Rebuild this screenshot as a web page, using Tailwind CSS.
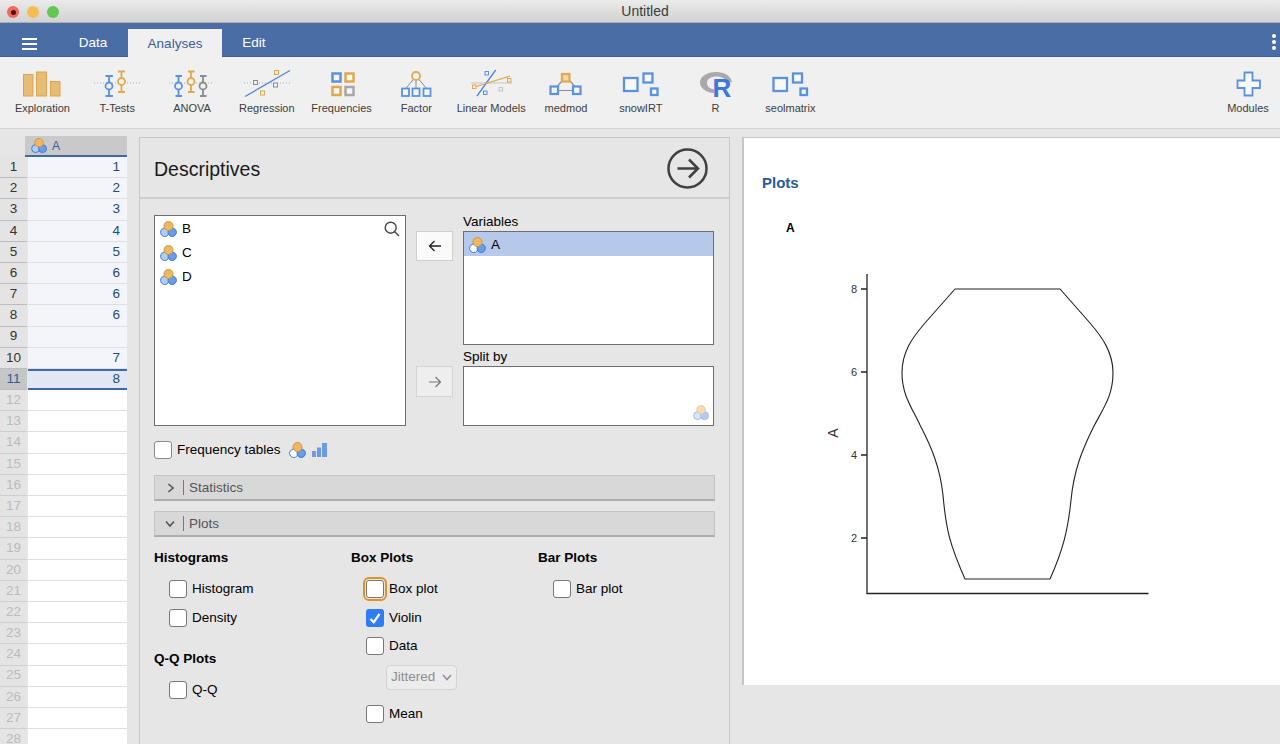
<!DOCTYPE html>
<html lang="en">
<head>
  <meta charset="UTF-8" />
  <title>Untitled</title>
  <script src="https://cdn.jsdelivr.net/npm/@tailwindcss/browser@4"></script>
</head>
<body class="bg-[#e6e6e6] text-black h-screen overflow-hidden flex flex-col font-['Liberation_Sans',Arial,sans-serif]">

  <!-- icon symbols -->
  <svg class="hidden">
    <defs>
      <symbol id="var" viewBox="0 0 18 17">
        <circle cx="4.800" cy="11.300" r="4.200" fill="currentColor" stroke="#3b78d8" stroke-width="1"/>
        <circle cx="12.200" cy="11.300" r="4.200" fill="#6c9be6" stroke="#3b78d8" stroke-width="1"/>
        <circle cx="8.500" cy="5" r="4.500" fill="#eeb765" stroke="#c9963f" stroke-width="1"/>
      </symbol>
    </defs>
  </svg>

  <!-- title bar -->
  <div class="h-[23px] shrink-0 relative flex items-center justify-center bg-gradient-to-b from-[#ebebeb] to-[#d2d2d2] border-b border-[#b0b0b0]">
    <div class="absolute left-[7px] top-[6px] flex gap-[8px]">
      <div class="w-[12px] h-[12px] rounded-full bg-[#ee6a5f] flex items-center justify-center"><div class="w-[5px] h-[5px] rounded-full bg-[#5a0d08]"></div></div>
      <div class="w-[12px] h-[12px] rounded-full bg-[#f6be4f]"></div>
      <div class="w-[12px] h-[12px] rounded-full bg-[#62c554]"></div>
    </div>
    <span class="text-[14px] text-[#3c3c3c] ml-[10px] pt-[1px]">Untitled</span>
  </div>

  <!-- tabs -->
  <div class="h-[34px] shrink-0 bg-[#4a6da6] relative flex items-end text-[13.5px] text-white border-b border-[#3f5f96]">
    <div class="w-[58px] h-[28px] pt-[3px] flex items-center justify-center">
      <div class="w-[15px] flex flex-col gap-[3px]">
        <div class="h-[2px] bg-white"></div>
        <div class="h-[2px] bg-white"></div>
        <div class="h-[2px] bg-white"></div>
      </div>
    </div>
    <div class="w-[70px] h-[28px] pt-[2px] flex items-center justify-center">Data</div>
    <div class="w-[94px] h-[28px] pt-[2px] flex items-center justify-center bg-[#f0f0f0] text-[#3a5f98] -mb-px">Analyses</div>
    <div class="w-[64px] h-[28px] pt-[2px] flex items-center justify-center">Edit</div>
    <div class="absolute right-[4px] top-[11px] flex flex-col gap-[2px]">
      <div class="w-[4px] h-[4px] rounded-full bg-white"></div>
      <div class="w-[4px] h-[4px] rounded-full bg-white"></div>
      <div class="w-[4px] h-[4px] rounded-full bg-white"></div>
    </div>
  </div>

  <!-- ribbon -->
  <div class="h-[72px] shrink-0 bg-[#f0f0f0] border-b border-[#d6d6d6] pl-[5px] flex text-[11px] text-[#3d3d3d]">
    <div class="w-[74.8px] pt-[7px] flex flex-col items-center">
      <svg class="w-[60px] h-[36px]" viewBox="12 64 60 36"><g fill="#e6bd76" stroke="#dba44f"><rect x="23.5" y="74.5" width="9.5" height="21.5"/><rect x="36.5" y="72" width="10" height="24"/><rect x="50.5" y="81.5" width="9.5" height="14.5"/></g></svg>
      <span class="leading-[17px]">Exploration</span>
    </div>
    <div class="w-[74.8px] pt-[7px] flex flex-col items-center">
      <svg class="w-[60px] h-[36px]" viewBox="87 64 60 36" fill="none" stroke-width="1.800">
        <path d="M94 83H140" stroke="#aaa" stroke-width="1" stroke-dasharray="1 2"/>
        <path d="M105.500 76H113M109 76V96M105.500 96H113" stroke="#5b92e0"/><circle cx="109" cy="86" r="3.500" fill="#f0f0f0" stroke="#5b92e0"/>
        <path d="M118 71.500H125M121.500 71.500V92M118 92H125" stroke="#e0a84f"/><circle cx="121.500" cy="81.500" r="3.500" fill="#f0f0f0" stroke="#e0a84f"/>
      </svg>
      <span class="leading-[17px]">T-Tests</span>
    </div>
    <div class="w-[74.8px] pt-[7px] flex flex-col items-center">
      <svg class="w-[60px] h-[36px]" viewBox="162 64 60 36" fill="none" stroke-width="1.800">
        <path d="M169 83H214" stroke="#aaa" stroke-width="1" stroke-dasharray="1 2"/>
        <path d="M175.500 76H182M178.500 76V96M175.500 96H182" stroke="#5b92e0"/><circle cx="178.500" cy="86" r="3.500" fill="#f0f0f0" stroke="#5b92e0"/>
        <path d="M188 71.500H194.500M191 71.500V92M188 92H194.500" stroke="#e0a84f"/><circle cx="191" cy="81.500" r="3.500" fill="#f0f0f0" stroke="#e0a84f"/>
        <path d="M200 76H206.500M203 76V96M200 96H206.500" stroke="#8c8c8c"/><circle cx="203" cy="86" r="3.500" fill="#f0f0f0" stroke="#8c8c8c"/>
      </svg>
      <span class="leading-[17px]">ANOVA</span>
    </div>
    <div class="w-[74.8px] pt-[7px] flex flex-col items-center">
      <svg class="w-[60px] h-[36px]" viewBox="237 64 60 36" fill="none">
        <path d="M244 83H291" stroke="#aaa" stroke-dasharray="1 2"/>
        <path d="M245 96.500L290 70.500" stroke="#4f85d8" stroke-width="1.300"/>
        <rect x="253.500" y="80.500" width="4" height="4" fill="#f0f0f0" stroke="#8c8c8c"/>
        <rect x="273.500" y="83" width="4" height="4" fill="#f0f0f0" stroke="#8c8c8c"/>
        <rect x="274.500" y="70.500" width="4" height="4" stroke="#e0a84f"/>
        <rect x="260.500" y="91" width="4" height="4" stroke="#e0a84f"/>
      </svg>
      <span class="leading-[17px]">Regression</span>
    </div>
    <div class="w-[74.8px] pt-[7px] flex flex-col items-center">
      <svg class="w-[60px] h-[36px]" viewBox="311 64 60 36" fill="#f5f5f5" stroke-width="2.500">
        <rect x="331.500" y="73.500" width="8" height="8" stroke="#5b92e0"/>
        <rect x="344.500" y="73.500" width="8" height="8" stroke="#e0a84f"/>
        <rect x="331.500" y="87" width="8" height="8" stroke="#e0a84f"/>
        <rect x="344.500" y="87" width="8" height="8" stroke="#a8a8a8"/>
      </svg>
      <span class="leading-[17px]">Frequencies</span>
    </div>
    <div class="w-[74.8px] pt-[7px] flex flex-col items-center">
      <svg class="w-[60px] h-[36px]" viewBox="386 64 60 36" fill="#f5f5f5" stroke-width="1.800">
        <path d="M416 76L405.500 89M416 76V89M416 76L427 89" stroke="#8c8c8c" stroke-width="1"/>
        <circle cx="416" cy="76" r="4" stroke="#e0a84f"/>
        <rect x="402" y="88.500" width="7" height="7.500" stroke="#5b92e0"/>
        <rect x="412.500" y="88.500" width="7" height="7.500" stroke="#5b92e0"/>
        <rect x="423.500" y="88.500" width="7" height="7.500" stroke="#5b92e0"/>
      </svg>
      <span class="leading-[17px]">Factor</span>
    </div>
    <div class="w-[74.8px] pt-[7px] flex flex-col items-center">
      <svg class="w-[60px] h-[36px]" viewBox="461 64 60 36" fill="none" stroke-width="1">
        <path d="M471 83H512" stroke="#c4c4c4"/>
        <path d="M477 96L495.700 70" stroke="#4f85d8" stroke-width="1.300"/>
        <path d="M473 87.500L510 76" stroke="#e0a84f" stroke-width="1.300"/>
        <rect x="485" y="71.500" width="3.500" height="3.500" fill="#f0f0f0" stroke="#5b92e0"/>
        <rect x="507.500" y="78.500" width="3.500" height="3.500" fill="#f0f0f0" stroke="#e0a84f"/>
        <rect x="472.500" y="85" width="3.500" height="3.500" fill="#f0f0f0" stroke="#e0a84f"/>
        <rect x="483.500" y="91" width="3.500" height="3.500" fill="#f0f0f0" stroke="#5b92e0"/>
        <rect x="499" y="87.500" width="3.500" height="3.500" fill="#f0f0f0" stroke="#c4c4c4"/>
      </svg>
      <span class="leading-[17px]">Linear Models</span>
    </div>
    <div class="w-[74.8px] pt-[7px] flex flex-col items-center">
      <svg class="w-[60px] h-[36px]" viewBox="536 64 60 36" fill="#f5f5f5" stroke-width="2.200">
        <path d="M562 81L555 89M570 81L577 89M558 90.500H573" stroke="#8c8c8c" stroke-width="1.200"/>
        <rect x="562" y="74" width="7.500" height="7.500" fill="#f3d9a6" stroke="#e0a84f"/>
        <rect x="550.500" y="86.500" width="7.500" height="7.500" stroke="#5b92e0"/>
        <rect x="573" y="86.500" width="7.500" height="7.500" stroke="#5b92e0"/>
      </svg>
      <span class="leading-[17px]">medmod</span>
    </div>
    <div class="w-[74.8px] pt-[7px] flex flex-col items-center">
      <svg class="w-[60px] h-[36px]" viewBox="611 64 60 36" fill="#f8f8f8" stroke="#5b92e0" stroke-width="2.300">
        <rect x="624" y="78" width="13.500" height="13"/>
        <rect x="643.500" y="73.500" width="9" height="9"/>
        <rect x="651" y="88.500" width="6.500" height="6.500"/>
      </svg>
      <span class="leading-[17px]">snowIRT</span>
    </div>
    <div class="w-[74.8px] pt-[7px] flex flex-col items-center">
      <svg class="w-[60px] h-[40px] -mb-[4px]" viewBox="686 64 60 40">
        <path fill="#a9a9ad" d="M716 72C707 72 700 76.500 700 82.500C700 88 706 92.500 714 93V89.500C709 88.500 707 86 707 82.500C707 79 711 76.500 716 76.500C722 76.500 726 79 727 82L732 82C731 76 724.500 72 716 72Z"/>
        <text x="712.500" y="96.500" font-family="'Liberation Sans',Arial,sans-serif" font-weight="700" font-size="26" fill="#3c78d8">R</text>
      </svg>
      <span class="leading-[17px]">R</span>
    </div>
    <div class="w-[74.8px] pt-[7px] flex flex-col items-center">
      <svg class="w-[60px] h-[36px]" viewBox="760 64 60 36" fill="#f8f8f8" stroke="#5b92e0" stroke-width="2.300">
        <rect x="773.500" y="78" width="13.500" height="13"/>
        <rect x="793" y="73.500" width="9" height="9"/>
        <rect x="800.500" y="88.500" width="6.500" height="6.500"/>
      </svg>
      <span class="leading-[17px]">seolmatrix</span>
    </div>
    <div class="ml-auto w-[64px] pt-[7px] flex flex-col items-center">
      <svg class="w-[60px] h-[36px]" viewBox="1218 64 60 36" fill="#f8f8f8" stroke="#5b92e0" stroke-width="1.800">
        <path d="M1244.500 72.500H1252.500V80.500H1260V88H1252.500V95.500H1244.500V88H1237.500V80.500H1244.500Z"/>
      </svg>
      <span class="leading-[17px]">Modules</span>
    </div>
  </div>

  <!-- main area -->
  <div class="flex-1 min-h-0 flex items-start">

    <!-- spreadsheet -->
    <div class="w-[127px] shrink-0 mt-[7px] text-[13.5px]">
      <div class="flex h-[21px]">
        <div class="w-[25px]"></div>
        <div class="flex-1 bg-[#c9c9c9] border-b-2 border-[#3f6aa8] flex items-center pl-[6px] gap-[4px] text-[#3a5f98] text-[12px]">
          <svg class="w-[17px] h-[16px] text-[#b3cdf0]"><use href="#var"/></svg>A
        </div>
      </div>
      <div class="flex h-[21.2px]"><div class="w-[27px] bg-[#e4e4e4] border-b border-[#bcbcbc] flex items-center justify-center text-[#333]">1</div><div class="flex-1 ml-px bg-[#f3f5fa] border-b border-[#dfdfdf] flex items-center justify-end pr-[7px] text-[#264a7c]">1</div></div>
      <div class="flex h-[21.2px]"><div class="w-[27px] bg-[#e4e4e4] border-b border-[#bcbcbc] flex items-center justify-center text-[#333]">2</div><div class="flex-1 ml-px bg-[#f3f5fa] border-b border-[#dfdfdf] flex items-center justify-end pr-[7px] text-[#264a7c]">2</div></div>
      <div class="flex h-[21.2px]"><div class="w-[27px] bg-[#e4e4e4] border-b border-[#bcbcbc] flex items-center justify-center text-[#333]">3</div><div class="flex-1 ml-px bg-[#f3f5fa] border-b border-[#dfdfdf] flex items-center justify-end pr-[7px] text-[#264a7c]">3</div></div>
      <div class="flex h-[21.2px]"><div class="w-[27px] bg-[#e4e4e4] border-b border-[#bcbcbc] flex items-center justify-center text-[#333]">4</div><div class="flex-1 ml-px bg-[#f3f5fa] border-b border-[#dfdfdf] flex items-center justify-end pr-[7px] text-[#264a7c]">4</div></div>
      <div class="flex h-[21.2px]"><div class="w-[27px] bg-[#e4e4e4] border-b border-[#bcbcbc] flex items-center justify-center text-[#333]">5</div><div class="flex-1 ml-px bg-[#f3f5fa] border-b border-[#dfdfdf] flex items-center justify-end pr-[7px] text-[#264a7c]">5</div></div>
      <div class="flex h-[21.2px]"><div class="w-[27px] bg-[#e4e4e4] border-b border-[#bcbcbc] flex items-center justify-center text-[#333]">6</div><div class="flex-1 ml-px bg-[#f3f5fa] border-b border-[#dfdfdf] flex items-center justify-end pr-[7px] text-[#264a7c]">6</div></div>
      <div class="flex h-[21.2px]"><div class="w-[27px] bg-[#e4e4e4] border-b border-[#bcbcbc] flex items-center justify-center text-[#333]">7</div><div class="flex-1 ml-px bg-[#f3f5fa] border-b border-[#dfdfdf] flex items-center justify-end pr-[7px] text-[#264a7c]">6</div></div>
      <div class="flex h-[21.2px]"><div class="w-[27px] bg-[#e4e4e4] border-b border-[#bcbcbc] flex items-center justify-center text-[#333]">8</div><div class="flex-1 ml-px bg-[#f3f5fa] border-b border-[#dfdfdf] flex items-center justify-end pr-[7px] text-[#264a7c]">6</div></div>
      <div class="flex h-[21.2px]"><div class="w-[27px] bg-[#e4e4e4] border-b border-[#bcbcbc] flex items-center justify-center text-[#333]">9</div><div class="flex-1 ml-px bg-[#f3f5fa] border-b border-[#dfdfdf]"></div></div>
      <div class="flex h-[21.2px]"><div class="w-[27px] bg-[#e4e4e4] border-b border-[#bcbcbc] flex items-center justify-center text-[#333]">10</div><div class="flex-1 ml-px bg-[#f3f5fa] border-b border-[#dfdfdf] flex items-center justify-end pr-[7px] text-[#264a7c]">7</div></div>
      <div class="flex h-[21.2px]"><div class="w-[27px] bg-[#c6c6c6] border-b border-[#bcbcbc] flex items-center justify-center text-[#2f5c9c]">11</div><div class="flex-1 ml-px bg-[#e1e8f3] border-y-2 border-[#3f6aa8] flex items-center justify-end pr-[7px] text-[#264a7c]">8</div></div>
      <div class="flex h-[21.2px]"><div class="w-[27px] bg-[#e4e4e4] border-b border-[#cfcfcf] flex items-center justify-center text-[#bbb]">12</div><div class="flex-1 ml-px bg-white border-b border-[#dfdfdf]"></div></div>
      <div class="flex h-[21.2px]"><div class="w-[27px] bg-[#e4e4e4] border-b border-[#cfcfcf] flex items-center justify-center text-[#bbb]">13</div><div class="flex-1 ml-px bg-white border-b border-[#dfdfdf]"></div></div>
      <div class="flex h-[21.2px]"><div class="w-[27px] bg-[#e4e4e4] border-b border-[#cfcfcf] flex items-center justify-center text-[#bbb]">14</div><div class="flex-1 ml-px bg-white border-b border-[#dfdfdf]"></div></div>
      <div class="flex h-[21.2px]"><div class="w-[27px] bg-[#e4e4e4] border-b border-[#cfcfcf] flex items-center justify-center text-[#bbb]">15</div><div class="flex-1 ml-px bg-white border-b border-[#dfdfdf]"></div></div>
      <div class="flex h-[21.2px]"><div class="w-[27px] bg-[#e4e4e4] border-b border-[#cfcfcf] flex items-center justify-center text-[#bbb]">16</div><div class="flex-1 ml-px bg-white border-b border-[#dfdfdf]"></div></div>
      <div class="flex h-[21.2px]"><div class="w-[27px] bg-[#e4e4e4] border-b border-[#cfcfcf] flex items-center justify-center text-[#bbb]">17</div><div class="flex-1 ml-px bg-white border-b border-[#dfdfdf]"></div></div>
      <div class="flex h-[21.2px]"><div class="w-[27px] bg-[#e4e4e4] border-b border-[#cfcfcf] flex items-center justify-center text-[#bbb]">18</div><div class="flex-1 ml-px bg-white border-b border-[#dfdfdf]"></div></div>
      <div class="flex h-[21.2px]"><div class="w-[27px] bg-[#e4e4e4] border-b border-[#cfcfcf] flex items-center justify-center text-[#bbb]">19</div><div class="flex-1 ml-px bg-white border-b border-[#dfdfdf]"></div></div>
      <div class="flex h-[21.2px]"><div class="w-[27px] bg-[#e4e4e4] border-b border-[#cfcfcf] flex items-center justify-center text-[#bbb]">20</div><div class="flex-1 ml-px bg-white border-b border-[#dfdfdf]"></div></div>
      <div class="flex h-[21.2px]"><div class="w-[27px] bg-[#e4e4e4] border-b border-[#cfcfcf] flex items-center justify-center text-[#bbb]">21</div><div class="flex-1 ml-px bg-white border-b border-[#dfdfdf]"></div></div>
      <div class="flex h-[21.2px]"><div class="w-[27px] bg-[#e4e4e4] border-b border-[#cfcfcf] flex items-center justify-center text-[#bbb]">22</div><div class="flex-1 ml-px bg-white border-b border-[#dfdfdf]"></div></div>
      <div class="flex h-[21.2px]"><div class="w-[27px] bg-[#e4e4e4] border-b border-[#cfcfcf] flex items-center justify-center text-[#bbb]">23</div><div class="flex-1 ml-px bg-white border-b border-[#dfdfdf]"></div></div>
      <div class="flex h-[21.2px]"><div class="w-[27px] bg-[#e4e4e4] border-b border-[#cfcfcf] flex items-center justify-center text-[#bbb]">24</div><div class="flex-1 ml-px bg-white border-b border-[#dfdfdf]"></div></div>
      <div class="flex h-[21.2px]"><div class="w-[27px] bg-[#e4e4e4] border-b border-[#cfcfcf] flex items-center justify-center text-[#bbb]">25</div><div class="flex-1 ml-px bg-white border-b border-[#dfdfdf]"></div></div>
      <div class="flex h-[21.2px]"><div class="w-[27px] bg-[#e4e4e4] border-b border-[#cfcfcf] flex items-center justify-center text-[#bbb]">26</div><div class="flex-1 ml-px bg-white border-b border-[#dfdfdf]"></div></div>
      <div class="flex h-[21.2px]"><div class="w-[27px] bg-[#e4e4e4] border-b border-[#cfcfcf] flex items-center justify-center text-[#bbb]">27</div><div class="flex-1 ml-px bg-white border-b border-[#dfdfdf]"></div></div>
      <div class="flex h-[21.2px]"><div class="w-[27px] bg-[#e4e4e4] border-b border-[#cfcfcf] flex items-center justify-center text-[#bbb]">28</div><div class="flex-1 ml-px bg-white border-b border-[#dfdfdf]"></div></div>
    </div>

    <!-- options panel -->
    <div class="w-[591px] shrink-0 ml-[12px] mt-[8px] h-[620px] border-x border-t border-[#c6c6c6] text-[13.5px]">
      <div class="h-[61px] pt-[1px] border-b-2 border-[#cecece] pl-[14px] pr-[21px] flex items-center justify-between">
        <h1 class="text-[19.5px] text-[#1a1a1a] mt-[3px]">Descriptives</h1>
        <svg class="w-[41px] h-[41px]" viewBox="0 0 41 41" fill="none" stroke="#404040" stroke-width="2.500">
          <circle cx="20.500" cy="20.500" r="19"/>
          <path d="M10.500 20.500H30M22 11.500L31 20.500L22 29.500"/>
        </svg>
      </div>

      <div class="px-[14px]">
        <!-- variable pickers -->
        <div class="flex pt-[16px]">
          <div class="relative w-[252px] h-[211px] bg-white border border-[#6e6e6e] pt-[1px] pl-[5px]">
            <div class="h-[24px] flex items-center gap-[4px]"><svg class="w-[18px] h-[17px] text-[#b3cdf0]"><use href="#var"/></svg>B</div>
            <div class="h-[24px] flex items-center gap-[4px]"><svg class="w-[18px] h-[17px] text-[#b3cdf0]"><use href="#var"/></svg>C</div>
            <div class="h-[24px] flex items-center gap-[4px]"><svg class="w-[18px] h-[17px] text-[#b3cdf0]"><use href="#var"/></svg>D</div>
            <svg class="absolute right-[5px] top-[5px] w-[16px] h-[16px]" viewBox="0 0 16 16" fill="none" stroke="#444" stroke-width="1.400">
              <circle cx="6.700" cy="6.700" r="5.500"/><path d="M10.700 10.700L15 15"/>
            </svg>
          </div>
          <div class="w-[37px] ml-[10px] pt-[16px]">
            <div class="h-[30px] bg-[#fafafa] border border-[#cfcfcf] flex items-center justify-center">
              <svg class="w-[14px] h-[12px]" viewBox="0 0 14 12" fill="none" stroke="#222" stroke-width="1.300"><path d="M13 6H1.500M6.500 1L1.500 6L6.500 11"/></svg>
            </div>
            <div class="h-[31px] mt-[105px] bg-[#eeeeee] border border-[#d4d4d4] flex items-center justify-center">
              <svg class="w-[14px] h-[12px]" viewBox="0 0 14 12" fill="none" stroke="#777" stroke-width="1.200"><path d="M1 6H12.500M7.500 1L12.500 6L7.500 11"/></svg>
            </div>
          </div>
          <div class="w-[251px] ml-[10px]">
            <div class="h-[16px] leading-[14px]">Variables</div>
            <div class="h-[114px] bg-white border border-[#6e6e6e]">
              <div class="h-[24px] pt-[2px] bg-[#b7c9ea] flex items-center gap-[4px] pl-[5px]"><svg class="w-[18px] h-[17px] text-white"><use href="#var"/></svg>A</div>
            </div>
            <div class="h-[21px] flex items-end leading-[19px]">Split by</div>
            <div class="h-[60px] bg-white border border-[#6e6e6e] flex items-end justify-end pr-[3px] pb-[4px]">
              <svg class="w-[17px] h-[16px] opacity-50 text-[#b3cdf0]"><use href="#var"/></svg>
            </div>
          </div>
        </div>

        <!-- frequency tables -->
        <div class="flex items-center h-[18px] mt-[15px]">
          <div class="w-[18px] h-[18px] bg-white border border-[#8a8a8a] rounded-[3px]"></div>
          <span class="ml-[5px]">Frequency tables</span>
          <svg class="ml-[8px] w-[18px] h-[17px] text-white"><use href="#var"/></svg>
          <svg class="ml-[5px] w-[15px] h-[14px]" viewBox="0 0 15 14" fill="#6c9be6"><rect x="0" y="8" width="4" height="6"/><rect x="5" y="4.500" width="4" height="9.500"/><rect x="10" y="0" width="5" height="14"/></svg>
        </div>

        <!-- collapsible sections -->
        <div class="h-[26px] mt-[16px] bg-[#d8d8d8] border border-[#c4c4c4] border-b-2 border-b-[#adadad] flex items-center text-[#555]">
          <svg class="ml-[12px] w-[8px] h-[10px]" viewBox="0 0 8 10" fill="none" stroke="#555" stroke-width="1.600"><path d="M1.500 1L6 5L1.500 9"/></svg>
          <div class="ml-[8px] w-px h-[15px] bg-[#777]"></div>
          <span class="ml-[5px] pt-[1px]">Statistics</span>
        </div>
        <div class="h-[26px] mt-[10px] bg-[#d8d8d8] border border-[#c4c4c4] border-b-2 border-b-[#adadad] flex items-center text-[#555]">
          <svg class="ml-[10px] w-[10px] h-[8px]" viewBox="0 0 10 8" fill="none" stroke="#555" stroke-width="1.600"><path d="M1 1.500L5 6L9 1.500"/></svg>
          <div class="ml-[8px] w-px h-[15px] bg-[#777]"></div>
          <span class="ml-[5px] pt-[1px]">Plots</span>
        </div>

        <!-- plot options -->
        <div class="flex">
          <div class="w-[197px]">
            <h2 class="h-[14px] leading-[14px] mt-[14px] font-bold">Histograms</h2>
            <div class="flex items-center h-[18px] mt-[15px] ml-[15px]"><div class="w-[18px] h-[18px] bg-white border border-[#777] rounded-[3px]"></div><span class="ml-[5px]">Histogram</span></div>
            <div class="flex items-center h-[18px] mt-[11px] ml-[15px]"><div class="w-[18px] h-[18px] bg-white border border-[#777] rounded-[3px]"></div><span class="ml-[5px]">Density</span></div>
            <h2 class="h-[14px] leading-[14px] mt-[25px] font-bold">Q-Q Plots</h2>
            <div class="flex items-center h-[18px] mt-[15px] ml-[15px]"><div class="w-[18px] h-[18px] bg-white border border-[#777] rounded-[3px]"></div><span class="ml-[5px]">Q-Q</span></div>
          </div>
          <div class="w-[187px]">
            <h2 class="h-[14px] leading-[14px] mt-[14px] font-bold">Box Plots</h2>
            <div class="flex items-center h-[18px] mt-[15px] ml-[15px]"><div class="w-[18px] h-[18px] bg-white border border-[#777] rounded-[3px] outline-2 outline-offset-1 outline-[#dc951f]"></div><span class="ml-[5px]">Box plot</span></div>
            <div class="flex items-center h-[18px] mt-[11px] ml-[15px]">
              <div class="w-[18px] h-[18px] bg-[#2f7cf6] rounded-[3px] flex items-center justify-center">
                <svg class="w-[12px] h-[11px]" viewBox="0 0 12 11" fill="none" stroke="white" stroke-width="2.200"><path d="M1.500 6L4.700 9.200L10.500 1"/></svg>
              </div>
              <span class="ml-[5px]">Violin</span>
            </div>
            <div class="flex items-center h-[18px] mt-[10px] ml-[15px]"><div class="w-[18px] h-[18px] bg-white border border-[#777] rounded-[3px]"></div><span class="ml-[5px]">Data</span></div>
            <div class="w-[71px] h-[25px] mt-[10px] ml-[35px] bg-[#ececec] border border-[#d4d4d4] rounded-[4px] flex items-center justify-between pl-[4px] pr-[4px] text-[#8e8e8e]">
              Jittered
              <svg class="w-[10px] h-[7px]" viewBox="0 0 10 7" fill="none" stroke="#8e8e8e" stroke-width="1.500"><path d="M1 1L5 5.500L9 1"/></svg>
            </div>
            <div class="flex items-center h-[18px] mt-[15px] ml-[15px]"><div class="w-[18px] h-[18px] bg-white border border-[#777] rounded-[3px]"></div><span class="ml-[5px]">Mean</span></div>
          </div>
          <div>
            <h2 class="h-[14px] leading-[14px] mt-[14px] font-bold">Bar Plots</h2>
            <div class="flex items-center h-[18px] mt-[15px] ml-[15px]"><div class="w-[18px] h-[18px] bg-white border border-[#777] rounded-[3px]"></div><span class="ml-[5px]">Bar plot</span></div>
          </div>
        </div>
      </div>
    </div>

    <!-- results -->
    <div class="flex-1 ml-[12px] mt-[8px] h-[548px] bg-white border-l-2 border-t border-[#c6c6c6] pl-[18px]">
      <h2 class="mt-[35px] h-[20px] leading-[20px] text-[15px] font-bold text-[#2a5b9b]">Plots</h2>
      <h3 class="mt-[28px] h-[14px] leading-[14px] ml-[24px] text-[12px] font-bold">A</h3>
      <svg class="mt-[32px] ml-[58px] w-[340px] h-[335px] block" viewBox="820 267 340 335" fill="none" stroke="#222">
        <path d="M867 274V593.500H1148.500" stroke-width="1.300"/>
        <path d="M861 289H867M861 372H867M861 455H867M861 538H867" stroke-width="1.300"/>
        <g fill="#333" stroke="none" font-size="11" font-family="'Liberation Sans',Arial,sans-serif" text-anchor="middle">
          <text x="854" y="293">8</text>
          <text x="854" y="376">6</text>
          <text x="854" y="459">4</text>
          <text x="854" y="542">2</text>
          <text transform="translate(838,433) rotate(-90)" font-size="14">A</text>
        </g>
        <path d="M955 289L925 323C912 338 902 352 902 373C902 395 912 408 920 425C932 448 940 468 943 495C946 530 950 545 965 579H1050C1063 550 1068 530 1071 500C1074 470 1082 450 1094 426C1104 407 1113 395 1113 373C1113 352 1102 337 1090 323L1060 289Z" stroke-width="1.100"/>
      </svg>
    </div>
  </div>
</body>
</html>
